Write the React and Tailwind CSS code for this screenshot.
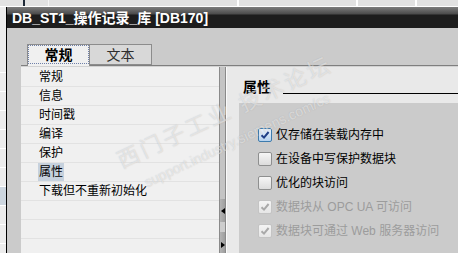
const font = "font-['Liberation_Sans','Noto_Sans_CJK_SC',sans-serif]"

const navItems = ['常规', '信息', '时间戳', '编译', '保护', '属性', '下载但不重新初始化', '', '', '']

const options = [
  { label: '仅存储在装载内存中', checked: true },
  { label: '在设备中写保护数据块' },
  { label: '优化的块访问' },
  { label: '数据块从 OPC UA 可访问', checked: true, disabled: true },
  { label: '数据块可通过 Web 服务器访问', checked: true, disabled: true },
]

function CheckBox({ checked, disabled }) {
  const box = disabled
    ? 'border-[#c4c4c4] bg-[linear-gradient(#f4f4f4,#e6e6e6)]'
    : checked
      ? 'border-[#3d7bad] bg-[linear-gradient(#eaf3fc,#b6d2ee)]'
      : 'border-[#8e8f8f] bg-[linear-gradient(#f6f6f6,#dcdcdc)]'
  return (
    <span className={`flex h-[14px] w-[14px] shrink-0 items-center justify-center rounded-[2px] border ${box}`}>
      {checked && (
        <svg width="10" height="10" viewBox="0 0 10 10">
          <path
            d="M1.5 5.2 L4 7.6 L8.6 2"
            fill="none"
            stroke={disabled ? '#a9a9a9' : '#1f3f86'}
            strokeWidth="2"
          />
        </svg>
      )}
    </span>
  )
}

function Arrow({ dir }) {
  return (
    <svg width="4" height="6" viewBox="0 0 4 6">
      <path d={dir === 'left' ? 'M4 0 L0 3 L4 6 Z' : 'M0 0 L4 3 L0 6 Z'} fill="#000" />
    </svg>
  )
}

export default function App() {
  return (
    <div className={`relative flex h-[253px] w-[458px] flex-col overflow-hidden bg-[#e6e6e6] ${font}`}>
      {/* strip of the window behind */}
      <div className="flex h-[6px] shrink-0 bg-[#e2e2e2]">
        <div className="w-[23px]" />
        <div className="w-[2px] bg-[#1f2a38]" />
        <div className="w-[24px] border-r border-[#f4f4f4]" />
        <div className="w-[190px] border-r-2 border-white" />
        <div className="w-[119px] border-r-2 border-white" />
        <div className="w-[59px] border-r-2 border-white" />
      </div>
      <div className="h-px shrink-0 bg-white" />

      <div className="flex min-h-0 flex-1">
        {/* left edge of the tree behind */}
        <div className="flex w-[6px] flex-col bg-[#ececec]">
          <div className="h-[47px] shrink-0" />
          {Array.from({ length: 10 }).map((_, i) => (
            <div
              key={i}
              className={`h-[19px] shrink-0 border-b border-white ${i === 7 ? 'bg-[#cdd6df]' : ''}`}
            />
          ))}
        </div>
        <div className="w-px bg-black" />

        <div className="flex min-w-0 flex-1 flex-col">
          <div className="flex h-[21px] shrink-0 items-center bg-[linear-gradient(to_bottom,#7c7c7c_0px,#4b4b4b_7px,#1d1d1d_8px,#1d1d1d_100%)] pl-[5px]">
            <span className="text-[14px] leading-[16px] font-bold text-white">DB_ST1_操作记录_库 [DB170]</span>
          </div>

          <div className="flex min-h-0 flex-1 flex-col bg-[#cbcbcb] pl-[14px] pt-[16px]">
            {/* tabs */}
            <div className="relative z-10 -mb-px flex h-[22px] shrink-0 pl-[6px]">
              <div className="h-[22px] w-[63px] border-x border-t border-[#8c8c8c] bg-[#f0f0f0]">
                <div className="flex h-[19px] items-center justify-center border border-dotted border-[#6f80a8]">
                  <span className="text-[14px] leading-[16px] font-bold text-black">常规</span>
                </div>
              </div>
              <div className="flex h-[21px] w-[62px] items-center justify-center border-y border-r border-[#8c8c8c] bg-[#d8d8d8]">
                <span className="text-[14px] leading-[16px] text-[#2e2e2e]">文本</span>
              </div>
            </div>

            {/* tab panel */}
            <div className="flex min-h-0 flex-1 flex-col border-t border-[#7f7f7f]">
              <div className="h-px shrink-0 bg-[#d2d2d2]" />
              <div className="flex min-h-0 flex-1">
                <div className="w-[198px] bg-[#f0f0f0] pt-px">
                  {navItems.map((item, i) => (
                    <div key={i} className="flex h-[19px] items-center border-b border-[#e2e2e2] pl-[17px]">
                      {item && (
                        <span
                          className={`px-px text-[12px] leading-[18px] text-black ${item === '属性' ? 'bg-[#c6d1dd]' : ''}`}
                        >
                          {item}
                        </span>
                      )}
                    </div>
                  ))}
                </div>

                {/* splitter */}
                <div className="flex w-[8px]">
                  <div className="w-px bg-[#8a8a8a]" />
                  <div className="flex w-[5px] flex-col bg-[#c4c4c4]">
                    <div className="h-[132px] shrink-0" />
                    <div className="flex h-[23px] shrink-0 items-center justify-center bg-[linear-gradient(to_right,#b4b4b4,#9e9e9e)]">
                      <Arrow dir="left" />
                    </div>
                    <div className="h-[10px] shrink-0 bg-[#cdcdcd]" />
                    <div className="flex h-[26px] shrink-0 items-center justify-center bg-[linear-gradient(to_right,#b4b4b4,#9e9e9e)]">
                      <Arrow dir="right" />
                    </div>
                  </div>
                  <div className="w-px bg-[#8a8a8a]" />
                  <div className="w-px bg-[#fafafa]" />
                </div>

                {/* properties */}
                <div className="flex min-w-0 flex-1 flex-col bg-[#e9e9e9] pt-[12px]">
                  <div className="flex h-[16px] shrink-0 pl-[16px]">
                    <span className="text-[14px] leading-[16px] font-bold text-black">属性</span>
                    <div className="ml-[12px] mt-[14px] h-px flex-1 bg-black" />
                  </div>
                  <div className="mt-[8px] ml-[12px] flex-1 bg-[#cbcbcb] pl-[19px] pt-[20px]">
                    {options.map((o) => (
                      <div key={o.label} className="flex h-[24px] items-center gap-[4px]">
                        <CheckBox checked={o.checked} disabled={o.disabled} />
                        <span
                          className={`text-[12px] leading-[16px] whitespace-nowrap ${o.disabled ? 'text-[#9c9c9c]' : 'text-black'}`}
                        >
                          {o.label}
                        </span>
                      </div>
                    ))}
                  </div>
                </div>
              </div>
            </div>
          </div>
        </div>
      </div>

      {/* forum watermark */}
      <div className="pointer-events-none absolute left-[100px] top-[100px] w-[250px] -rotate-[25deg] text-center text-[22px] leading-[26px] tracking-[3px] text-white/50 [text-shadow:0_0_1px_rgba(110,110,110,0.35)]">
        西门子工业 技术论坛
      </div>
      <div className="pointer-events-none absolute left-[112px] top-[132px] w-[250px] -rotate-[25deg] text-center text-[14px] leading-[16px] text-white/50 [text-shadow:0_0_1px_rgba(110,110,110,0.35)]">
        support.industry.siemens.com/cs
      </div>
    </div>
  )
}
